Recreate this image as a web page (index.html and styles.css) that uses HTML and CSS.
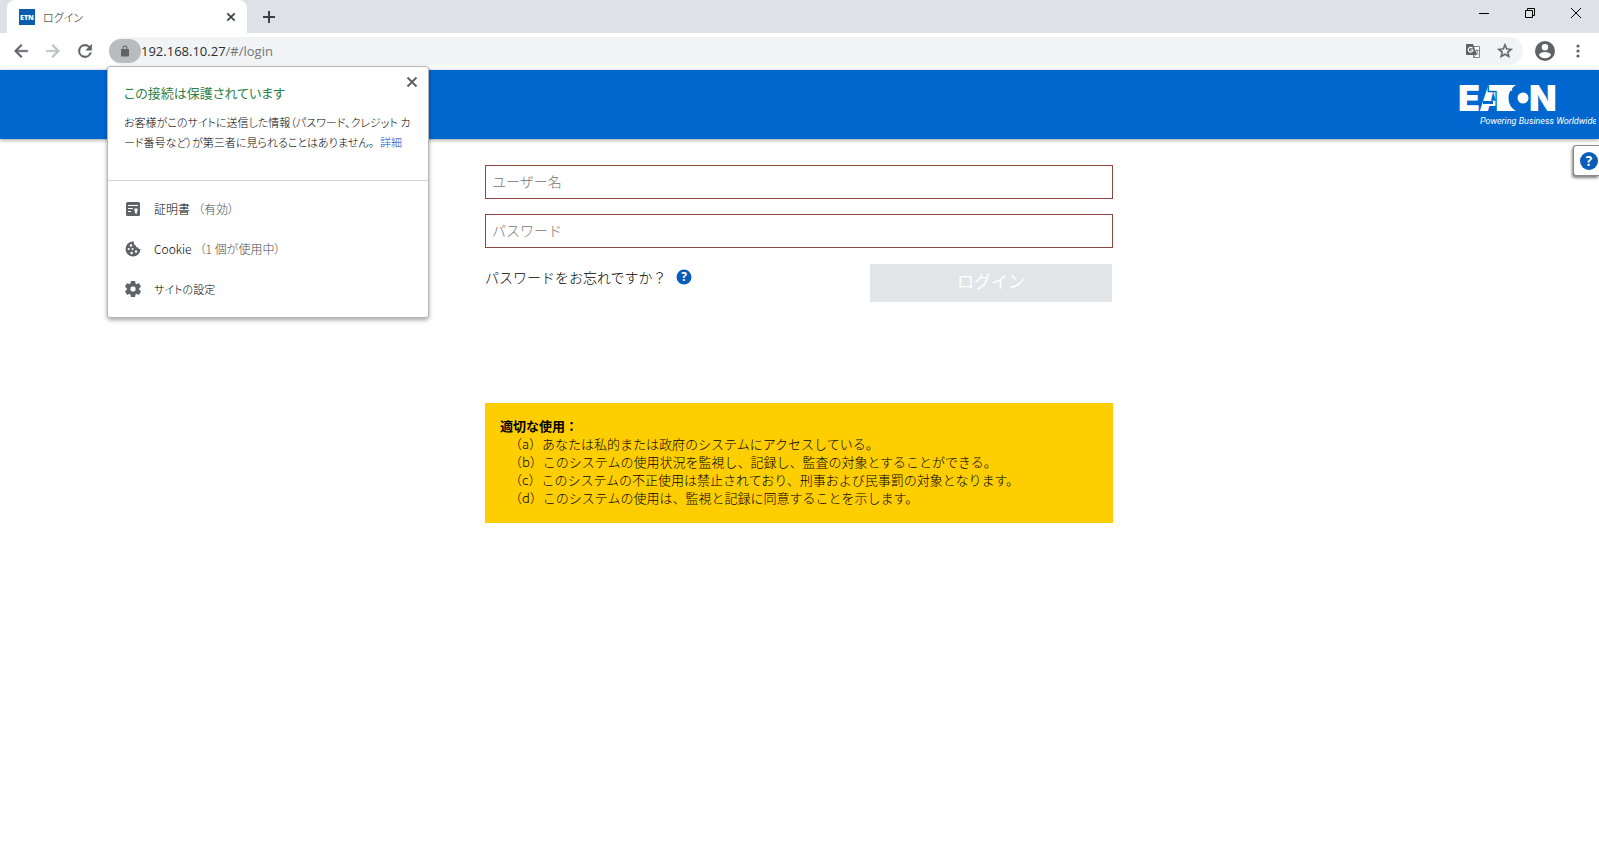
FILE: index.html
```html
<!DOCTYPE html>
<html lang="ja">
<head>
<meta charset="utf-8">
<title>ログイン</title>
<link rel="stylesheet" href="styles.css">
</head>
<body>
<div class="browser">
  <div class="tabstrip">
    <div class="tab">
      <svg class="favicon" viewBox="0 0 16 16" aria-hidden="true"><rect width="16" height="16" fill="#0a5cad"/><text class="favicon-text" x="8" y="11" text-anchor="middle">ETN</text></svg>
      <span class="tab-title">ログイン</span>
      <button class="icon-btn" aria-label="タブを閉じる"><svg width="16" height="16" viewBox="0 0 16 16"><path d="M4.300 4.300 11.700 11.700M11.700 4.300 4.300 11.700" stroke="#3c4043" stroke-width="1.700"/></svg></button>
    </div>
    <button class="icon-btn new-tab" aria-label="新しいタブ"><svg width="16" height="16" viewBox="0 0 16 16"><path d="M8 2v12M2 8h12" stroke="#3c4043" stroke-width="2"/></svg></button>
    <div class="window-controls">
      <button class="icon-btn" aria-label="最小化"><svg width="12" height="12" viewBox="0 0 12 12"><path d="M1 6.500h10" stroke="#000"/></svg></button>
      <button class="icon-btn" aria-label="元に戻す"><svg width="12" height="12" viewBox="0 0 12 12"><path d="M1.500 3.500h7v7h-7zM3.500 3.500v-2h7v7h-2" fill="none" stroke="#000"/></svg></button>
      <button class="icon-btn" aria-label="閉じる"><svg width="12" height="12" viewBox="0 0 12 12"><path d="M1 1l10 10M11 1 1 11" stroke="#000"/></svg></button>
    </div>
  </div>
  <div class="toolbar">
    <div class="nav">
      <button class="icon-btn" aria-label="戻る"><svg width="20" height="20" viewBox="0 0 24 24"><path fill="#5f6368" stroke="#5f6368" stroke-width=".6" d="M20 11H7.830l5.590-5.590L12 4l-8 8 8 8 1.410-1.410L7.830 13H20v-2z"/></svg></button>
      <button class="icon-btn" aria-label="進む"><svg width="20" height="20" viewBox="0 0 24 24"><path fill="#bdbfc1" stroke="#bdbfc1" stroke-width=".6" d="M4 13h12.170l-5.590 5.590L12 20l8-8-8-8-1.410 1.410L16.170 11H4v2z"/></svg></button>
      <button class="icon-btn" aria-label="再読み込み"><svg width="20" height="20" viewBox="0 0 24 24"><path fill="#5f6368" stroke="#5f6368" stroke-width=".6" d="M17.650 6.350A7.960 7.960 0 0 0 12 4a8 8 0 1 0 7.730 10h-2.080A6 6 0 1 1 12 6c1.660 0 3.140.690 4.220 1.780L13 11h7V4l-2.350 2.350z"/></svg></button>
    </div>
    <div class="omnibox">
      <button class="lock" aria-label="サイト情報を表示"><svg width="12" height="12" viewBox="0 0 24 24"><path fill="#5f6368" d="M18 8h-1V6A5 5 0 0 0 7 6v2H6a2 2 0 0 0-2 2v11a2 2 0 0 0 2 2h12a2 2 0 0 0 2-2V10a2 2 0 0 0-2-2zM8.900 8V6a3.100 3.100 0 0 1 6.200 0v2z"/></svg></button>
      <div class="url"><span class="url-host">192.168.10.27</span>/#/login</div>
      <button class="icon-btn" aria-label="このページを翻訳"><svg width="16" height="16" viewBox="0 0 16 16"><path d="M6.500 3.500h8v11H8.500" fill="#fff" stroke="#80868b"/><path d="M1 1h7l4 11H2a1 1 0 0 1-1-1z" fill="#5f6368"/><path d="M7.500 5.400A2.300 2.300 0 1 0 7.900 7H5.500" fill="none" stroke="#fff" stroke-width="1.200"/><path d="M9.500 7.500h4.500M11.800 6.500v1M13 7.500c-.5 2-1.700 3-2.500 3.500M10.500 8.500c.8 1.500 2 2.500 3 3M8.500 12v2.500L10.500 12" fill="none" stroke="#80868b"/></svg></button>
      <button class="icon-btn" aria-label="ブックマークに追加"><svg width="16" height="16" viewBox="1 1 22 22"><path fill="#5f6368" stroke="#5f6368" stroke-width=".5" d="M22.500 9.100l-7.500-.650L12 1.500 9 8.460l-7.500.640 5.700 4.900-1.700 7.400L12 17.500l6.500 3.900-1.700-7.400zM12 15.300l-3.900 2.300 1-4.400-3.400-2.900 4.500-.4L12 5.800l1.800 4.100 4.500.4-3.400 2.900 1 4.400z"/></svg></button>
    </div>
    <button class="icon-btn" aria-label="プロフィール"><svg width="20" height="20" viewBox="2 2 20 20"><path fill="#5f6368" d="M12 2a10 10 0 1 0 0 20 10 10 0 0 0 0-20zm0 3a3.200 3.200 0 1 1 0 6.400A3.200 3.200 0 0 1 12 5zm0 14.200A7.200 7.200 0 0 1 6 16c0-2 4-3.100 6-3.100s6 1.100 6 3.100a7.200 7.200 0 0 1-6 3.200z"/></svg></button>
    <button class="icon-btn menu-btn" aria-label="メニュー"><svg width="6" height="16" viewBox="0 0 6 16"><g fill="#5f6368"><circle cx="3" cy="3" r="1.600"/><circle cx="3" cy="8" r="1.600"/><circle cx="3" cy="13" r="1.600"/></g></svg></button>
  </div>
  <section class="site-info" aria-label="サイト情報">
    <div class="site-info-top">
      <button class="icon-btn popup-close" aria-label="閉じる"><svg width="12" height="12" viewBox="0 0 12 12"><path d="M1.500 1.500l9 9M10.500 1.500l-9 9" stroke="#5f6368" stroke-width="2"/></svg></button>
      <h2 class="site-info-title">この接続は保護されています</h2>
      <p class="site-info-text">お客様がこのサイトに送信した情報（パスワード、クレジット カ<br>ード番号など）が第三者に見られることはありません。<a class="details" href="#">詳細</a></p>
    </div>
    <ul class="site-info-list">
      <li class="site-info-item"><svg width="16" height="16" viewBox="0 0 16 16"><rect x="1" y="1" width="14" height="14" rx="1.500" fill="#5f6368"/><path d="M3 4.500h10M3 7.500h5M3 10.500h3" stroke="#fff" stroke-width="1.200"/><circle cx="11" cy="9" r="1.800" fill="#fff"/><path d="M10 9h2v4l-1-1-1 1z" fill="#fff"/></svg><span>証明書<span class="state">（有効）</span></span></li>
      <li class="site-info-item"><svg width="16" height="16" viewBox="0 0 16 16"><path d="M8 .500a7.500 7.500 0 1 0 7.500 7.500c-1.300.3-2.200-.4-2.400-1.500-1.600.2-2.600-.8-2.300-2.200C9.300 4 8.400 2.500 9 .600z" fill="#5f6368"/><g fill="#fff"><circle cx="6" cy="4.500" r="1.200"/><circle cx="3.700" cy="8" r="1.100"/><circle cx="7.600" cy="8" r="1"/><circle cx="6.600" cy="12" r="1.200"/><circle cx="11" cy="10.500" r="1.200"/></g></svg><span>Cookie<span class="state">（1 個が使用中）</span></span></li>
      <li class="site-info-item"><svg width="16" height="16" viewBox="2 2 20 20"><path fill="#5f6368" stroke="#5f6368" stroke-width=".4" d="M19.430 12.980a7.800 7.800 0 0 0 0-1.960l2.110-1.650a.5.5 0 0 0 .120-.640l-2-3.460a.5.5 0 0 0-.610-.220l-2.490 1a7.300 7.300 0 0 0-1.690-.980l-.380-2.650A.49.490 0 0 0 14 2h-4a.49.490 0 0 0-.490.420l-.380 2.650c-.610.250-1.170.590-1.690.980l-2.490-1a.49.490 0 0 0-.610.220l-2 3.460a.49.490 0 0 0 .120.640l2.110 1.650a8 8 0 0 0 0 1.960l-2.110 1.650a.5.5 0 0 0-.120.640l2 3.460c.120.220.390.300.610.220l2.490-1c.520.400 1.080.730 1.690.980l.380 2.650c.030.240.240.420.490.420h4c.250 0 .460-.180.490-.420l.380-2.650c.610-.250 1.170-.590 1.690-.980l2.490 1c.230.090.490 0 .610-.220l2-3.460a.5.5 0 0 0-.120-.640zM12 15.500a3.500 3.500 0 1 1 0-7 3.500 3.500 0 0 1 0 7z"/></svg><span class="site-settings">サイトの設定</span></li>
    </ul>
  </section>
</div>
<header class="site-header">
  <svg class="logo" width="139" height="58" viewBox="-2 -10 139 58" role="img" aria-label="EATON Powering Business Worldwide">
    <text class="logo-word" y="27"><tspan x="-1">E</tspan><tspan x="20">A</tspan><tspan class="logo-t" x="29">T</tspan><tspan x="70">N</tspan></text>
    <path d="M24 17h10v3H24z" fill="#0067cf"/>
    <path d="M44 1h13a15 15 0 0 0 0 26H44z" fill="#fff"/>
    <circle cx="64" cy="14" r="5.500" fill="#fff"/>
    <text class="logo-tag" x="21" y="40">Powering Business Worldwide</text>
  </svg>
</header>
<main class="page">
  <button class="help-tab" aria-label="ヘルプ"><svg width="18" height="18" viewBox="0 0 16 16"><circle cx="8" cy="8" r="8" fill="#0a5cb8"/><text class="help-mark" x="8" y="12" text-anchor="middle">?</text></svg></button>
  <form class="login">
    <input class="field" type="text" placeholder="ユーザー名" aria-label="ユーザー名">
    <input class="field" type="password" placeholder="パスワード" aria-label="パスワード">
    <div class="actions">
      <div class="forgot">パスワードをお忘れですか？<svg width="16" height="16" viewBox="0 0 16 16" role="img" aria-label="ヘルプ"><circle cx="8" cy="8" r="7.500" fill="#0a5cb8"/><text class="help-mark" x="8" y="12" text-anchor="middle">?</text></svg></div>
      <button class="submit" type="button" disabled>ログイン</button>
    </div>
  </form>
  <section class="notice">
    <h3 class="notice-title">適切な使用：</h3>
    <ul class="notice-list">
      <li>（a）あなたは私的または政府のシステムにアクセスしている。</li>
      <li>（b）このシステムの使用状況を監視し、記録し、監査の対象とすることができる。</li>
      <li>（c）このシステムの不正使用は禁止されており、刑事および民事罰の対象となります。</li>
      <li>（d）このシステムの使用は、監視と記録に同意することを示します。</li>
    </ul>
  </section>
</main>
</body>
</html>
```
FILE: styles.css
```css
* { box-sizing: border-box; }
body {
  margin: 0;
  background: #fff;
  color: #000;
  font-family: "Noto Sans CJK JP", sans-serif;
  font-size: 13px;
  font-weight: 300;
  line-height: 18px;
}
button, input { font: inherit; }
svg { display: block; flex: none; }
ul { list-style: none; margin: 0; padding: 0; }
h2, h3, p { margin: 0; }

.icon-btn {
  display: flex;
  align-items: center;
  justify-content: center;
  flex: none;
  padding: 0;
  border: 0;
  background: none;
}

/* Browser chrome */
.browser {
  position: relative;
  font-feature-settings: "palt";
}
.tabstrip {
  display: flex;
  height: 33px;
  padding-left: 7px;
  background: #dee1e6;
}
.tab {
  display: flex;
  align-items: center;
  gap: 8px;
  width: 240px;
  padding: 0 8px 0 12px;
  border-radius: 8px 8px 0 0;
  background: #fff;
}
.favicon { width: 16px; height: 16px; }
.favicon-text {
  font: 800 7px "Open Sans", sans-serif;
  fill: #fff;
}
.tab-title {
  flex: 1;
  font-size: 11px;
  color: #202124;
}
.new-tab { margin-left: 14px; }
.window-controls {
  display: flex;
  gap: 34px;
  margin-left: auto;
  padding: 0 17px 7px 0;
}
.toolbar {
  display: flex;
  align-items: center;
  height: 37px;
  padding: 0 18px 2px 11px;
  background: #fff;
}
.nav {
  display: flex;
  gap: 12px;
  margin-right: 14px;
}
.omnibox {
  display: flex;
  flex: 1;
  align-items: center;
  gap: 16px;
  height: 28px;
  margin-right: 12px;
  padding-right: 10px;
  border-radius: 14px;
  background: #f1f3f4;
}
.lock {
  display: flex;
  align-items: center;
  justify-content: center;
  width: 32px;
  height: 24px;
  margin-right: -16px;
  padding: 0;
  border: 0;
  border-radius: 12px;
  background: #b9bbbc;
}
.url {
  flex: 1;
  font-family: "Open Sans", sans-serif;
  font-size: 13px;
  font-weight: 400;
  color: #70757a;
}
.url-host { color: #2a2d30; }
.menu-btn { margin-left: 20px; }

.site-info {
  position: absolute;
  top: 66px;
  left: 107px;
  z-index: 2;
  width: 322px;
  border: 1px solid #b4b6b8;
  border-radius: 3px;
  background: #fff;
  box-shadow: 0 2px 4px rgba(0, 0, 0, 0.35);
}
.site-info-top {
  height: 114px;
  padding: 16px 16px 0;
  border-bottom: 1px solid #d4d4d4;
}
.popup-close {
  position: absolute;
  top: 9px;
  right: 10px;
}
.site-info-title {
  font-size: 13px;
  font-weight: 400;
  line-height: 20px;
  color: #2f8048;
}
.site-info-text {
  margin-top: 9px;
  font-size: 11px;
  line-height: 20px;
  white-space: nowrap;
}
.details {
  margin-left: 6px;
  color: #0b50cc;
  text-decoration: none;
}
.site-info-list { padding: 8px 0; }
.site-info-item {
  display: flex;
  align-items: center;
  gap: 13px;
  height: 40px;
  padding-left: 17px;
  font-size: 12px;
}
.site-settings { font-size: 11px; }
.state { margin-left: 8px; color: #4a4d50; }

/* Site */
.site-header {
  position: relative;
  z-index: 1;
  display: flex;
  justify-content: flex-end;
  height: 69px;
  padding: 4px 3px 0;
  background: #0067cf;
  box-shadow: 0 1px 4px rgba(0, 0, 0, 0.4);
}
.logo-word {
  font: 900 36px Inter, sans-serif;
  fill: #fff;
}
.logo-t { stroke: #0067cf; stroke-width: 3px; paint-order: stroke; }
.logo-tag {
  font: italic 9px Roboto, sans-serif;
  fill: #fff;
}
.page {
  position: relative;
  padding: 26px 17px 26px 16px;
}
.help-tab {
  position: absolute;
  top: 6px;
  right: 0;
  width: 26px;
  height: 31px;
  padding: 0 0 0 6px;
  border: 1px solid #8a8a8a;
  border-right: 0;
  border-radius: 3px 0 0 3px;
  background: #fff;
  box-shadow: -1px 2px 3px rgba(0, 0, 0, 0.5);
}
.help-mark {
  font: 700 12px "Open Sans", sans-serif;
  fill: #fff;
}
.login, .notice {
  max-width: 628px;
  margin: 0 auto;
}
.login {
  display: grid;
  gap: 15px;
}
.field {
  width: 100%;
  height: 34px;
  padding: 0 6px 2px;
  border: 1px solid #8f4640;
  border-radius: 0;
  background: #fff;
  font-size: 14px;
}
.field::placeholder { color: #757575; opacity: 1; }
.actions {
  display: flex;
  align-items: flex-start;
  justify-content: space-between;
  padding: 1px 1px 0 0;
}
.forgot {
  display: flex;
  align-items: center;
  gap: 9px;
  padding-top: 4px;
  font-size: 14px;
}
.submit {
  width: 242px;
  height: 38px;
  padding: 0 0 4px;
  border: 0;
  background: #e1e5e8;
  color: #fff;
  font-size: 17px;
  font-weight: 400;
}
.notice {
  margin-top: 101px;
  padding: 14px 15px 16px;
  background: #ffce00;
}
.notice-title {
  font-size: 13px;
  font-weight: 700;
  line-height: 18px;
}
.notice-list { padding-left: 9px; }
```
